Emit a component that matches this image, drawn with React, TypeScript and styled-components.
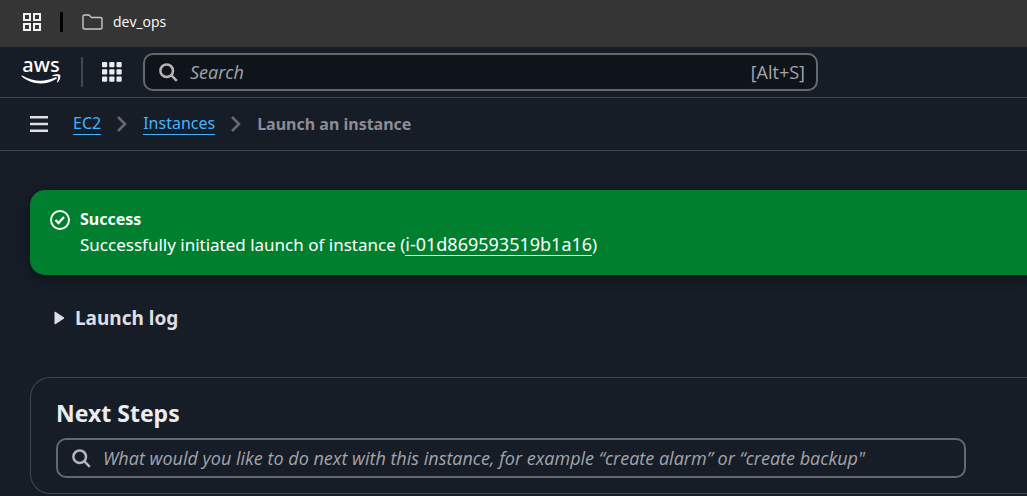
import React from "react";
import styled, { createGlobalStyle } from "styled-components";

const GlobalStyle = createGlobalStyle`
  *, *::before, *::after { box-sizing: border-box; }
  body {
    margin: 0;
    background: #161d26;
    color: #dedee3;
    font-family: "Noto Sans", "Open Sans", sans-serif;
    font-size: 17px;
    line-height: 25px;
    overflow-x: hidden;
  }
  h2, p, ol { margin: 0; padding: 0; }
`;

const BookmarksBar = styled.div`
  display: flex;
  align-items: center;
  height: 47px;
  padding: 0 23px 4px;
  background: #353535;
`;

const IconButton = styled.button`
  display: flex;
  padding: 0;
  border: 0;
  background: none;
  color: inherit;
  cursor: pointer;
`;

const BookmarksDivider = styled.span`
  width: 3px;
  height: 20px;
  margin: 0 19px;
  border-radius: 1px;
  background: #000;
`;

const Bookmark = styled.a`
  display: flex;
  align-items: center;
  gap: 10px;
  color: #fff;
  font-family: "Open Sans", sans-serif;
  font-size: 14px;
  line-height: 20px;
  text-decoration: none;
`;

const ServiceBar = styled.header`
  display: flex;
  align-items: center;
  height: 51px;
  padding: 0 21px;
  border-bottom: 1px solid #424650;
`;

const LogoLink = styled.a`
  display: flex;
  flex: none;
`;

const ServiceDivider = styled.span`
  flex: none;
  width: 2px;
  height: 30px;
  margin: 0 19px 0 20px;
  background: #424650;
`;

const SearchBox = styled.label<{ $width: number; $filled?: boolean }>`
  display: flex;
  align-items: center;
  width: 100%;
  max-width: ${(p) => p.$width}px;
  height: ${(p) => (p.$filled ? 38 : 40)}px;
  padding: 0 11px 0 14px;
  border: 2px solid #656871;
  border-radius: 10px;
  background: ${(p) => (p.$filled ? "#0f141a" : "transparent")};
  color: #b4b4bb;
  font-family: "Open Sans", sans-serif;
  font-size: 18px;
`;

const SearchInput = styled.input`
  flex: 1;
  min-width: 0;
  height: 26px;
  padding: 0;
  margin-left: 12px;
  border: 0;
  outline: 0;
  background: none;
  color: #dedee3;
  font: inherit;
  line-height: 24px;
  &::placeholder {
    color: #a4a4ad;
    font-style: italic;
    opacity: 1;
  }
`;

const Shortcut = styled.kbd`
  color: #a4a4ad;
  font: inherit;
`;

const ServiceSearch = styled.div`
  flex: 1;
  min-width: 0;
  margin-left: 21px;
`;

const BreadcrumbBar = styled.nav`
  display: flex;
  align-items: center;
  gap: 25px;
  height: 53px;
  padding: 0 30px;
  border-bottom: 1px solid #424650;
`;

const Crumbs = styled.ol`
  display: flex;
  align-items: center;
  list-style: none;
`;

const Crumb = styled.li`
  display: flex;
  align-items: center;
  color: #8c8c94;
  font-size: 16px;
  font-weight: 700;
`;

const CrumbLink = styled.a`
  border-bottom: 1px solid #42b4ff;
  color: #42b4ff;
  font-weight: 400;
  line-height: 21px;
  text-decoration: none;
`;

const CrumbArrow = styled.svg`
  flex: none;
  margin: 0 16px;
`;

const Content = styled.main`
  padding: 39px 0 2px 30px;
`;

const Flash = styled.section`
  display: flex;
  gap: 10px;
  padding: 17px 20px 18px;
  border-radius: 15px 0 0 15px;
  background: #00802f;
  box-shadow: 0 4px 12px #0f141a;
  color: #fff;
`;

const FlashIcon = styled.svg`
  flex: none;
  margin-top: 3px;
`;

const FlashTitle = styled.p`
  font-size: 16px;
  font-weight: 700;
`;

const InstanceLink = styled.a`
  display: inline-block;
  border-bottom: 1px solid #fff;
  color: inherit;
  font-size: 18px;
  line-height: 21px;
  text-decoration: none;
`;

const ExpandButton = styled.button`
  display: flex;
  align-items: center;
  gap: 10px;
  margin: 30px 0 46px 24px;
  padding: 0;
  border: 0;
  background: none;
  color: #dedee3;
  font: inherit;
  font-size: 19px;
  font-weight: 700;
  line-height: 26px;
  cursor: pointer;
`;

const Card = styled.section`
  padding: 20px 25px 15px;
  border: 1px solid #424650;
  border-right: 0;
  border-radius: 20px 0 0 20px;
`;

const CardTitle = styled.h2`
  margin-bottom: 10px;
  color: #ebebf0;
  font-size: 23px;
  font-weight: 700;
  line-height: 30px;
`;

const Magnifier = () => (
  <svg width="19" height="19" viewBox="0 0 19 19" fill="none" stroke="currentColor" strokeWidth="2.5" aria-hidden="true">
    <circle cx="7.7" cy="7.7" r="6.3" />
    <path d="M12.2 12.2l5.6 5.6" />
  </svg>
);

const Arrow = () => (
  <CrumbArrow width="10" height="16" viewBox="0 0 10 16" fill="none" stroke="#656871" strokeWidth="2.5" aria-hidden="true">
    <path d="M1 1l7 7-7 7" />
  </CrumbArrow>
);

const cells = [0, 7.25, 14.5];

export default function App() {
  return (
    <>
      <GlobalStyle />
      <BookmarksBar>
        <IconButton aria-label="Apps">
          <svg width="18" height="18" viewBox="0 0 18 18" fill="none" stroke="#f2f2f2" strokeWidth="2">
            <path d="M1 1h6v6H1zM11 1h6v6h-6zM1 11h6v6H1zM11 11h6v6h-6z" />
          </svg>
        </IconButton>
        <BookmarksDivider />
        <Bookmark href="#dev_ops">
          <svg width="21" height="16" viewBox="0 0 21 16" fill="none" stroke="#c8c8c8" strokeWidth="1.4" strokeLinejoin="round" aria-hidden="true">
            <path d="M1 2.5Q1 1 2.5 1H7l2.5 2.5h9Q20 3.500 20 5v8.500q0 1.500-1.500 1.500h-16Q1 15 1 13.500z" />
          </svg>
          dev_ops
        </Bookmark>
      </BookmarksBar>

      <ServiceBar>
        <LogoLink href="#home" aria-label="AWS home">
          <svg width="40" height="44" viewBox="0 -8 40 44" fill="#fff">
            <text x="20" y="14" textAnchor="middle" fontFamily="Noto Sans, sans-serif" fontSize="20" fontWeight="500">aws</text>
            <path d="M.5 17.700Q.9 17.200 1.700 17.700C13 24.300 24 24 34.500 19.300c1.300-.5 2 .6.9 1.400C26 27.500 11 27.500.8 18.600q-.5-.5-.3-.9z" />
            <path d="M31.500 17.600c1.900-1.500 6.700-1.800 7.600-.8.9 1.200-.2 5.700-2.300 7.500-.6.500-1.100.3-.8-.5.800-2 1.500-4.400 1-5.100-.6-.8-3-.6-5-.4-.8.100-1-.3-.5-.7z" />
          </svg>
        </LogoLink>
        <ServiceDivider />
        <IconButton aria-label="Services">
          <svg width="20" height="20" viewBox="0 0 20 20" fill="#ebebf0">
            {cells.map((y) => cells.map((x) => <rect key={`${x}-${y}`} x={x} y={y} width="5.2" height="5.2" rx="1" />))}
          </svg>
        </IconButton>
        <ServiceSearch>
          <SearchBox $width={675} $filled>
            <Magnifier />
            <SearchInput type="text" placeholder="Search" aria-label="Search" />
            <Shortcut>[Alt+S]</Shortcut>
          </SearchBox>
        </ServiceSearch>
      </ServiceBar>

      <BreadcrumbBar aria-label="Breadcrumbs">
        <IconButton aria-label="Open navigation">
          <svg width="18" height="16" viewBox="0 0 18 16" fill="#dedee3">
            <path d="M0 0h18v2.500H0zM0 6.750h18v2.500H0zM0 13.500h18V16H0z" />
          </svg>
        </IconButton>
        <Crumbs>
          <Crumb><CrumbLink href="#ec2">EC2</CrumbLink><Arrow /></Crumb>
          <Crumb><CrumbLink href="#instances">Instances</CrumbLink><Arrow /></Crumb>
          <Crumb aria-current="page">Launch an instance</Crumb>
        </Crumbs>
      </BreadcrumbBar>

      <Content>
        <Flash role="status">
          <FlashIcon width="20" height="20" viewBox="0 0 20 20" fill="none" stroke="#fff" strokeWidth="2" aria-hidden="true">
            <circle cx="10" cy="10" r="9" />
            <path d="M5.500 10l3 3 5.500-6" strokeWidth="2.300" />
          </FlashIcon>
          <div>
            <FlashTitle>Success</FlashTitle>
            <p>
              Successfully initiated launch of instance (<InstanceLink href="#instance">i-01d869593519b1a16</InstanceLink>)
            </p>
          </div>
        </Flash>

        <ExpandButton aria-expanded="false">
          <svg width="11" height="14" viewBox="0 0 11 14" fill="#dedee3" stroke="#dedee3" strokeLinejoin="round" aria-hidden="true">
            <path d="M1 1l9 6-9 6z" />
          </svg>
          Launch log
        </ExpandButton>

        <Card>
          <CardTitle>Next Steps</CardTitle>
          <SearchBox $width={910}>
            <Magnifier />
            <SearchInput
              type="text"
              aria-label="Next steps search"
              placeholder={"What would you like to do next with this instance, for example “create alarm” or “create backup\""}
            />
          </SearchBox>
        </Card>
      </Content>
    </>
  );
}
